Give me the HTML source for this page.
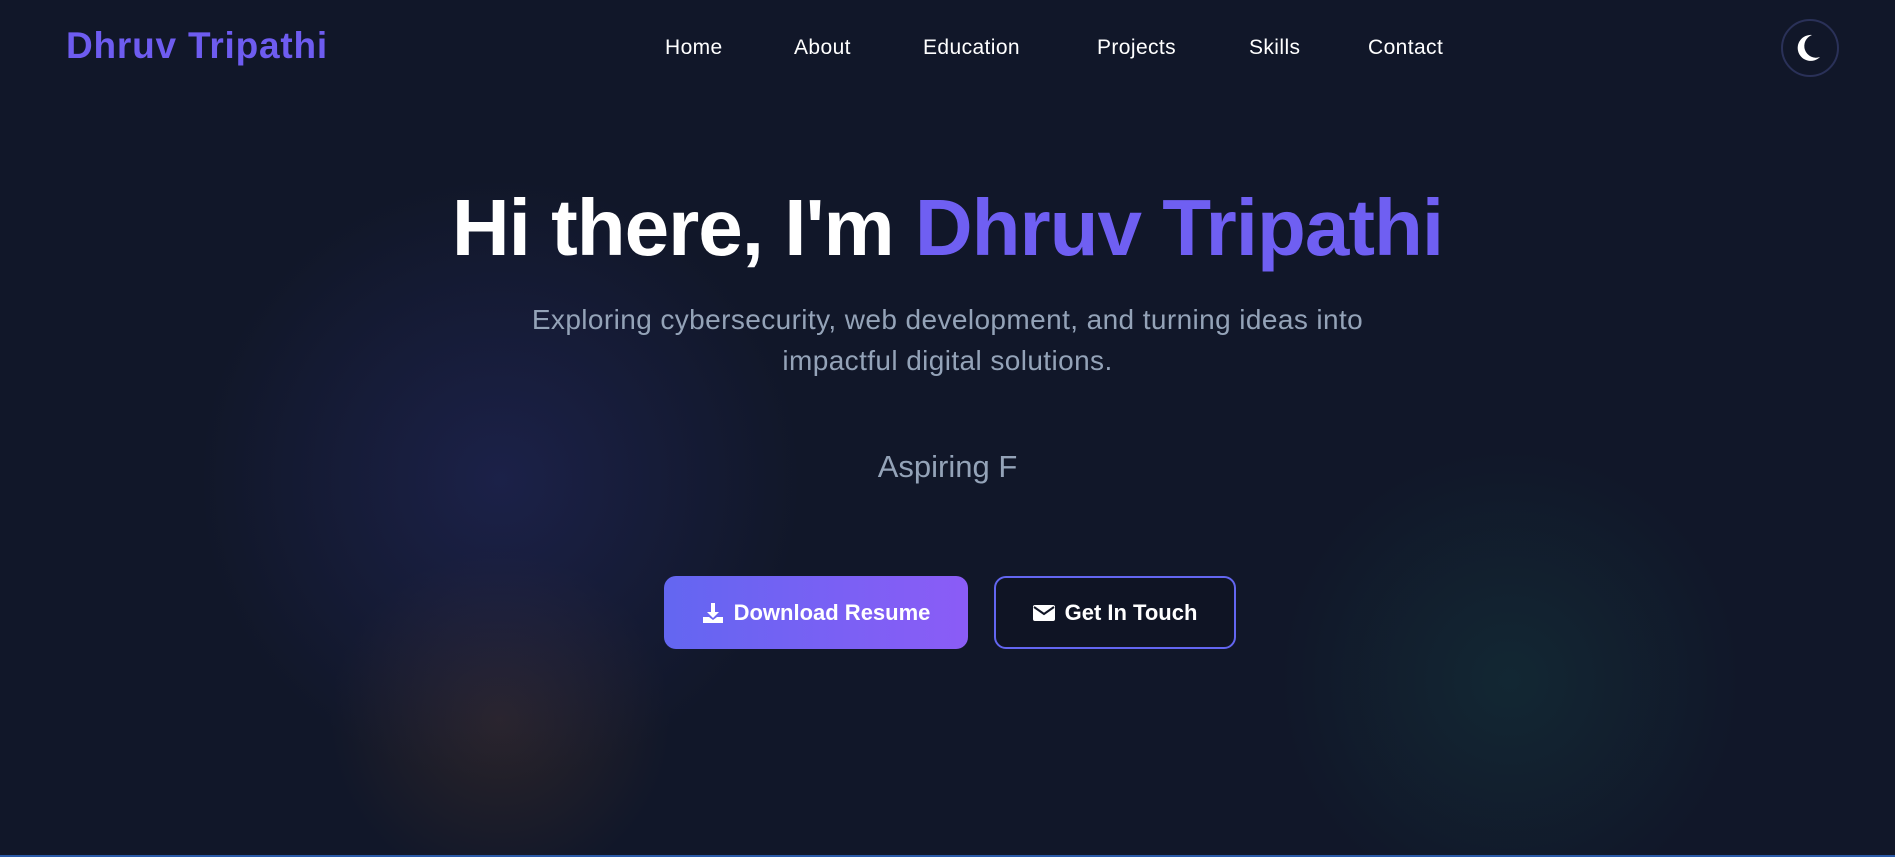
<!DOCTYPE html>
<html><head><meta charset="utf-8"><style>
html,body{margin:0;width:1895px;height:857px;overflow:hidden;background:#111729;font-family:"Liberation Sans",sans-serif;}
.bg{position:absolute;inset:0;background:
radial-gradient(circle at 500px 480px, rgba(40,45,110,.45) 0, rgba(40,45,110,0) 300px),
radial-gradient(circle at 500px 720px, rgba(80,55,40,.4) 0, rgba(80,55,40,0) 170px),
radial-gradient(circle at 1510px 680px, rgba(20,70,70,.35) 0, rgba(20,70,70,0) 230px),
#111729;}
.bar{position:absolute;left:0;right:0;bottom:0;height:2px;background:#2a5aa8}
.logo{position:absolute;left:66px;top:25px;font-size:37px;font-weight:bold;color:#6e5cf0;letter-spacing:.8px}
.nav a{position:absolute;top:36px;font-size:21px;color:#fff;text-decoration:none;letter-spacing:.4px}
.moon{position:absolute;left:1781px;top:19px;width:54px;height:54px;border:2px solid #2a3158;border-radius:50%}
h1{position:absolute;left:0;right:0;top:182px;margin:0;text-align:center;font-size:80px;font-weight:bold;color:#fff;letter-spacing:-1px}
h1 span{color:#6f5ff2}
.sub{position:absolute;left:0;right:0;top:299px;text-align:center;font-size:28px;line-height:41px;color:#94a3b8;letter-spacing:.4px}
.asp{position:absolute;left:0;right:0;top:449px;text-align:center;font-size:31px;color:#94a3b8}
.btn{position:absolute;top:576px;height:73px;border-radius:12px;box-sizing:border-box;color:#fff;font-weight:bold;font-size:22px;display:flex;align-items:center;justify-content:center;gap:10px}
.b1{left:664px;width:304px;background:linear-gradient(90deg,#6366f1,#8b5cf6)}
.b2{left:994px;width:242px;border:2px solid #6366f1;background:#0f1424}
</style></head><body>
<div class="bg"></div>
<div class="logo">Dhruv Tripathi</div>
<div class="nav">
<a style="left:665px">Home</a><a style="left:794px">About</a><a style="left:923px">Education</a><a style="left:1097px">Projects</a><a style="left:1249px">Skills</a><a style="left:1368px">Contact</a>
</div>
<div class="moon"><svg width="54" height="54" viewBox="0 0 54 54"><path d="M29 14a13 13 0 1 0 8 22a11 11 0 0 1-8-22z" fill="#fff"/></svg></div>
<h1>Hi there, I'm <span>Dhruv Tripathi</span></h1>
<div class="sub">Exploring cybersecurity, web development, and turning ideas into<br>impactful digital solutions.</div>
<div class="asp">Aspiring F</div>
<div class="btn b1"><svg width="22" height="22" viewBox="0 0 22 22"><path d="M9 1h4v9h4l-6 6-6-6h4z M1 15h6l4 3 4-3h6v6H1z" fill="#fff"/></svg>Download Resume</div>
<div class="btn b2"><svg width="22" height="18" viewBox="0 0 22 18"><rect x="0" y="1" width="22" height="16" rx="2" fill="#fff"/><path d="M1 3l10 7 10-7" stroke="#0f1424" stroke-width="2" fill="none"/></svg>Get In Touch</div>
<div class="bar"></div>
</body></html>
